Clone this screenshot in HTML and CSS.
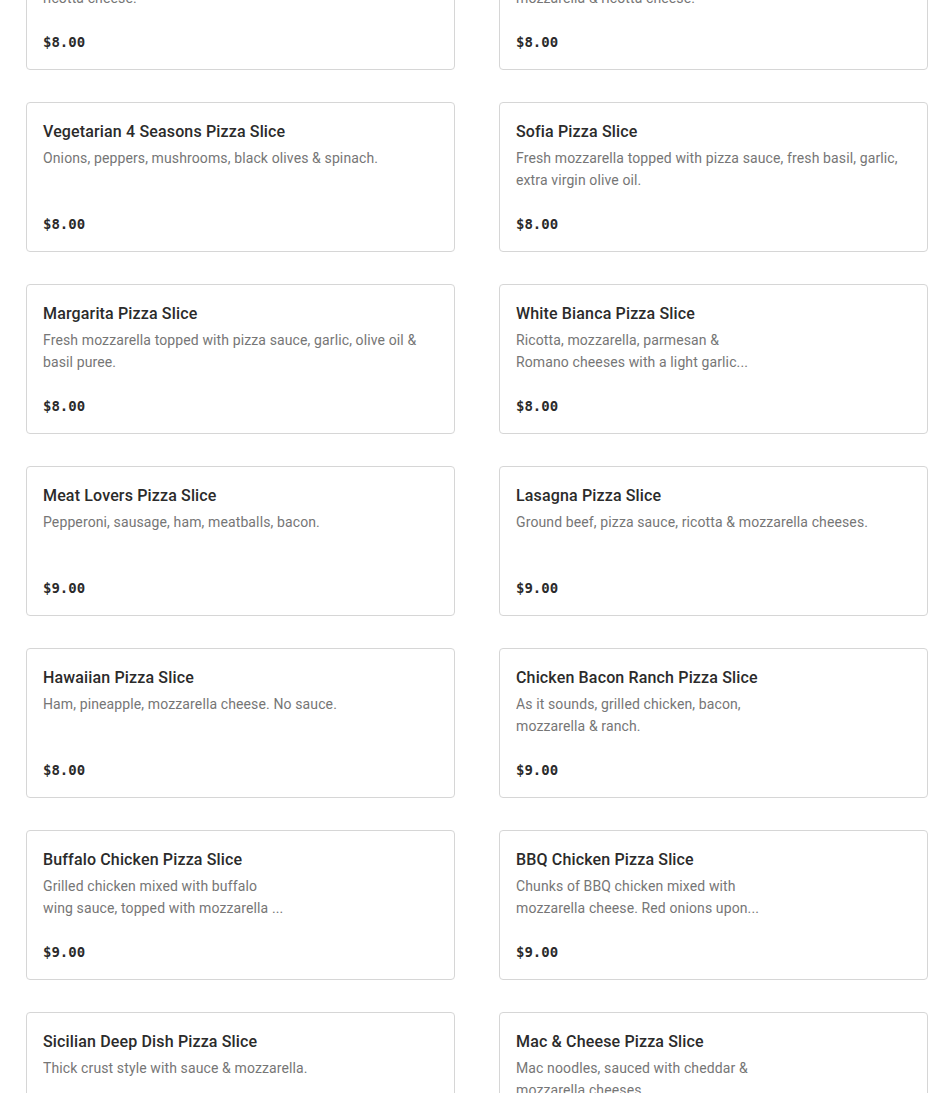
FILE: index.html
```html
<!DOCTYPE html>
<html lang="en">
<head>
<meta charset="utf-8">
<title>Pizza Slices</title>
<link rel="stylesheet" href="styles.css">
</head>
<body>
<main class="menu">
  <article class="card">
    <h3 class="card-title">Cheese &amp; Ricotta Pizza Slice</h3>
    <p class="card-desc narrow">Pizza sauce, mozzarella, parmesan &amp; ricotta cheese.</p>
    <div class="card-price">$8.00</div>
  </article>
  <article class="card">
    <h3 class="card-title">Sausage Ricotta Pizza Slice</h3>
    <p class="card-desc narrow">Sausage, pizza sauce, topped with mozzarella &amp; ricotta cheese.</p>
    <div class="card-price">$8.00</div>
  </article>

  <article class="card">
    <h3 class="card-title">Vegetarian 4 Seasons Pizza Slice</h3>
    <p class="card-desc">Onions, peppers, mushrooms, black olives &amp; spinach.</p>
    <div class="card-price">$8.00</div>
  </article>
  <article class="card">
    <h3 class="card-title">Sofia Pizza Slice</h3>
    <p class="card-desc">Fresh mozzarella topped with pizza sauce, fresh basil, garlic, extra virgin olive oil.</p>
    <div class="card-price">$8.00</div>
  </article>

  <article class="card">
    <h3 class="card-title">Margarita Pizza Slice</h3>
    <p class="card-desc">Fresh mozzarella topped with pizza sauce, garlic, olive oil &amp; basil puree.</p>
    <div class="card-price">$8.00</div>
  </article>
  <article class="card">
    <h3 class="card-title">White Bianca Pizza Slice</h3>
    <p class="card-desc narrow">Ricotta, mozzarella, parmesan &amp; Romano cheeses with a light garlic...</p>
    <div class="card-price">$8.00</div>
  </article>

  <article class="card">
    <h3 class="card-title">Meat Lovers Pizza Slice</h3>
    <p class="card-desc">Pepperoni, sausage, ham, meatballs, bacon.</p>
    <div class="card-price">$9.00</div>
  </article>
  <article class="card">
    <h3 class="card-title">Lasagna Pizza Slice</h3>
    <p class="card-desc">Ground beef, pizza sauce, ricotta &amp; mozzarella cheeses.</p>
    <div class="card-price">$9.00</div>
  </article>

  <article class="card">
    <h3 class="card-title">Hawaiian Pizza Slice</h3>
    <p class="card-desc">Ham, pineapple, mozzarella cheese. No sauce.</p>
    <div class="card-price">$8.00</div>
  </article>
  <article class="card">
    <h3 class="card-title">Chicken Bacon Ranch Pizza Slice</h3>
    <p class="card-desc narrow">As it sounds, grilled chicken, bacon, mozzarella &amp; ranch.</p>
    <div class="card-price">$9.00</div>
  </article>

  <article class="card">
    <h3 class="card-title">Buffalo Chicken Pizza Slice</h3>
    <p class="card-desc narrow">Grilled chicken mixed with buffalo wing sauce, topped with mozzarella ...</p>
    <div class="card-price">$9.00</div>
  </article>
  <article class="card">
    <h3 class="card-title">BBQ Chicken Pizza Slice</h3>
    <p class="card-desc narrow">Chunks of BBQ chicken mixed with mozzarella cheese. Red onions upon...</p>
    <div class="card-price">$9.00</div>
  </article>

  <article class="card">
    <h3 class="card-title">Sicilian Deep Dish Pizza Slice</h3>
    <p class="card-desc">Thick crust style with sauce &amp; mozzarella.</p>
    <div class="card-price">$9.00</div>
  </article>
  <article class="card">
    <h3 class="card-title">Mac &amp; Cheese Pizza Slice</h3>
    <p class="card-desc narrow">Mac noodles, sauced with cheddar &amp; mozzarella cheeses.</p>
    <div class="card-price">$9.00</div>
  </article>
</main>
</body>
</html>
```

FILE: styles.css
```css
* { box-sizing: border-box; }

html, body {
  margin: 0;
  padding: 0;
  background: #ffffff;
}

body {
  font-family: Roboto, "Noto Sans", "Liberation Sans", sans-serif;
  color: #2b2b2b;
  overflow: hidden;
}

.menu {
  display: grid;
  grid-template-columns: 429px 429px;
  column-gap: 44px;
  row-gap: 32px;
  padding-left: 26px;
  margin-top: -80px;
}

.card {
  height: 150px;
  border: 1px solid #d6d6d6;
  border-radius: 4px;
  padding: 16px 16px 17px;
  display: flex;
  flex-direction: column;
  background: #fff;
}

.card-title {
  margin: 1px 0 0;
  font-size: 16px;
  line-height: 24px;
  font-weight: 500;
  letter-spacing: 0.15px;
  color: #2b2b2b;
}

.card-desc {
  margin: 3px 0 0;
  font-size: 14px;
  line-height: 22px;
  letter-spacing: 0.12px;
  color: #767676;
  display: -webkit-box;
  -webkit-line-clamp: 2;
  -webkit-box-orient: vertical;
  overflow: hidden;
}

.card-desc.narrow {
  max-width: 244px;
}

.card-price {
  margin-top: auto;
  font-family: "DejaVu Sans Mono", "Liberation Mono", monospace;
  font-weight: 700;
  font-size: 14px;
  line-height: 20px;
  color: #2b2b2b;
}
```
